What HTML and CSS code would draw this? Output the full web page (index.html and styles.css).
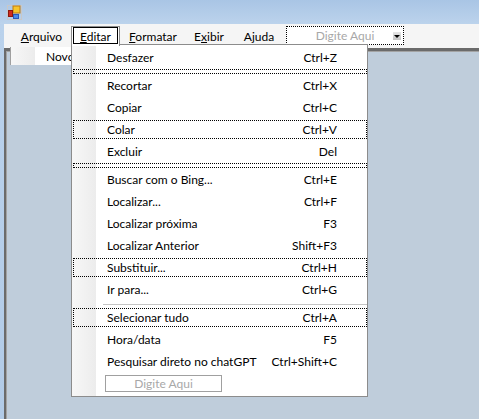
FILE: index.html
```html
<!DOCTYPE html>
<html>
<head>
<meta charset="utf-8">
<link rel="stylesheet" href="styles.css">
</head>
<body>
<div class="window">
  <div class="titlebar">
    <svg class="app-icon" width="15" height="15" viewBox="0 0 15 15">
      <rect x="0.5" y="0.5" width="14" height="14" fill="none" stroke="#c8c8c8"/>
      <rect x="6" y="1" width="7" height="7" fill="#f7c52c" stroke="#c07a10"/>
      <rect x="1.5" y="5.5" width="4" height="6" fill="#d22a1c" stroke="#8a1a10"/>
      <rect x="6.5" y="9.5" width="5" height="4" fill="#4a8ae8" stroke="#2a5ab8"/>
    </svg>
  </div>
  <div class="frame">
    <div class="client">
      <div class="menubar">
        <div class="mb-item w-arq"><span><u>A</u>rquivo</span></div>
        <div class="mb-item w-edi open"><span class="mb-focus"></span><span><u>E</u>ditar</span></div>
        <div class="mb-item w-for"><span><u>F</u>ormatar</span></div>
        <div class="mb-item w-exi"><span>E<u>x</u>ibir</span></div>
        <div class="mb-item w-aju"><span>A<u>j</u>uda</span></div>
        <div class="combo"><span class="combo-text">Digite Aqui</span><span class="combo-arrow"></span></div>
      </div>
      <div class="mdi"></div>
    </div>
  </div>
</div>

<div class="novo-menu"><span class="novo-text">Novo</span></div>

<div class="dropdown">
  <div class="mi"><span>Desfazer</span><span class="sc">Ctrl+Z</span></div>
  <div class="sep sel"></div>
  <div class="mi"><span>Recortar</span><span class="sc">Ctrl+X</span></div>
  <div class="mi"><span>Copiar</span><span class="sc">Ctrl+C</span></div>
  <div class="mi sel"><span>Colar</span><span class="sc">Ctrl+V</span></div>
  <div class="mi"><span>Excluir</span><span class="sc">Del</span></div>
  <div class="sep sel"></div>
  <div class="mi"><span>Buscar com o Bing...</span><span class="sc">Ctrl+E</span></div>
  <div class="mi"><span>Localizar...</span><span class="sc">Ctrl+F</span></div>
  <div class="mi"><span>Localizar próxima</span><span class="sc">F3</span></div>
  <div class="mi"><span>Localizar Anterior</span><span class="sc">Shift+F3</span></div>
  <div class="mi sel"><span>Substituir...</span><span class="sc">Ctrl+H</span></div>
  <div class="mi"><span>Ir para...</span><span class="sc">Ctrl+G</span></div>
  <div class="sep line"></div>
  <div class="mi sel"><span>Selecionar tudo</span><span class="sc">Ctrl+A</span></div>
  <div class="mi"><span>Hora/data</span><span class="sc">F5</span></div>
  <div class="mi"><span>Pesquisar direto no chatGPT</span><span class="sc">Ctrl+Shift+C</span></div>
  <div class="mi add"><span class="add-box">Digite Aqui</span></div>
</div>
</body>
</html>
```

FILE: styles.css
```css
html, body {
  margin: 0;
  padding: 0;
}
body {
  width: 479px;
  height: 419px;
  overflow: hidden;
  position: relative;
  font-family: "Lato", "Noto Sans", sans-serif;
  font-size: 12px;
  color: #000;
  background: #bfcddb;
}
.window {
  display: flex;
  flex-direction: column;
  height: 419px;
}
.titlebar {
  height: 24px;
  flex: none;
  background: linear-gradient(to bottom, #a9c5e5, #bcd3ec);
  position: relative;
}
.app-icon {
  position: absolute;
  left: 7px;
  top: 5px;
}
.frame {
  flex: 1;
  display: flex;
  padding-left: 4px;
  background: linear-gradient(to bottom, #bad2ec, #b2cbe7);
}
.client {
  flex: 1;
  display: flex;
  flex-direction: column;
}
.menubar {
  height: 24px;
  flex: none;
  background: #f5f5f5;
  display: flex;
  align-items: flex-start;
  padding-left: 8px;
}
.mb-item {
  height: 24px;
  display: flex;
  align-items: center;
  justify-content: center;
  box-sizing: border-box;
}
.w-arq { width: 59px; }
.w-edi { width: 49px; }
.w-for { width: 66px; }
.w-exi { width: 46px; }
.w-aju { width: 54px; }
.mb-item.open {
  margin-top: 2px;
  height: 20px;
  padding-top: 1px;
  align-items: flex-start;
  border: 1px solid #8c8c8c;
  border-bottom: none;
  background: #fff;
  position: relative;
  z-index: 5;
}
.mb-item.open span:last-child {
  position: relative;
  top: 1px;
}
.mb-focus {
  position: absolute;
  left: 1px;
  top: 0;
  width: 45px;
  height: 17px;
  box-sizing: border-box;
  border: 1px solid #000;
}
.combo {
  margin-top: 2px;
  width: 118px;
  height: 19px;
  box-sizing: border-box;
  border: 1px dotted #000;
  background: #fff;
  position: relative;
  display: flex;
  align-items: center;
  justify-content: center;
}
.combo-text {
  color: #a8a8a8;
}
.combo-arrow {
  position: absolute;
  right: 2px;
  top: 5px;
  width: 8px;
  height: 8px;
  background: linear-gradient(to bottom, #e6e6e6, #c4c4c4);
}
.combo-arrow::after {
  content: "";
  position: absolute;
  left: 1px;
  top: 3px;
  border-left: 3px solid transparent;
  border-right: 3px solid transparent;
  border-top: 3px solid #000;
}
.mdi {
  flex: 1;
  border-top: 3px solid #6b6b6b;
  border-left: 2px solid #6b6b6b;
  box-shadow: inset 1px 1px 0 #a3a3a3;
  background: #bfcddb;
}
.novo-menu {
  position: absolute;
  left: 10px;
  top: 47px;
  width: 70px;
  height: 18px;
  box-sizing: border-box;
  border-left: 1px solid #a0a0a0;
  background: linear-gradient(to right, #f7f7f7 0, #ececec 24px, #fff 24px);
  display: flex;
  align-items: center;
  padding-left: 35px;
}
.dropdown {
  position: absolute;
  left: 71px;
  top: 44px;
  width: 297px;
  box-sizing: border-box;
  border: 1px solid #8c8c8c;
  padding: 1px 0 2px;
  background: linear-gradient(to right, #f7f7f7 0, #ececec 24px, #fff 24px);
  z-index: 2;
}
.mi {
  height: 22px;
  display: flex;
  align-items: center;
  padding: 0 30px 0 35px;
  position: relative;
}
.sc {
  margin-left: auto;
}
.sep {
  height: 6px;
  position: relative;
}
.mi.sel::after,
.sep.sel::after {
  content: "";
  position: absolute;
  left: 1px;
  right: 0;
  top: 2px;
  bottom: 1px;
  border: 1px dotted #000;
}
.sep.sel::after {
  top: 1px;
  bottom: 0;
}
.sep.line::before {
  content: "";
  position: absolute;
  left: 31px;
  right: 0;
  top: 4px;
  height: 1px;
  background: #c5c5c5;
}
.mi.add {
  padding-left: 33px;
  align-items: flex-start;
  padding-top: 3px;
  box-sizing: border-box;
}
.add-box {
  width: 117px;
  height: 17px;
  box-sizing: border-box;
  border: 1px solid #a0a0a0;
  color: #a8a8a8;
  display: flex;
  align-items: center;
  justify-content: center;
}
```
